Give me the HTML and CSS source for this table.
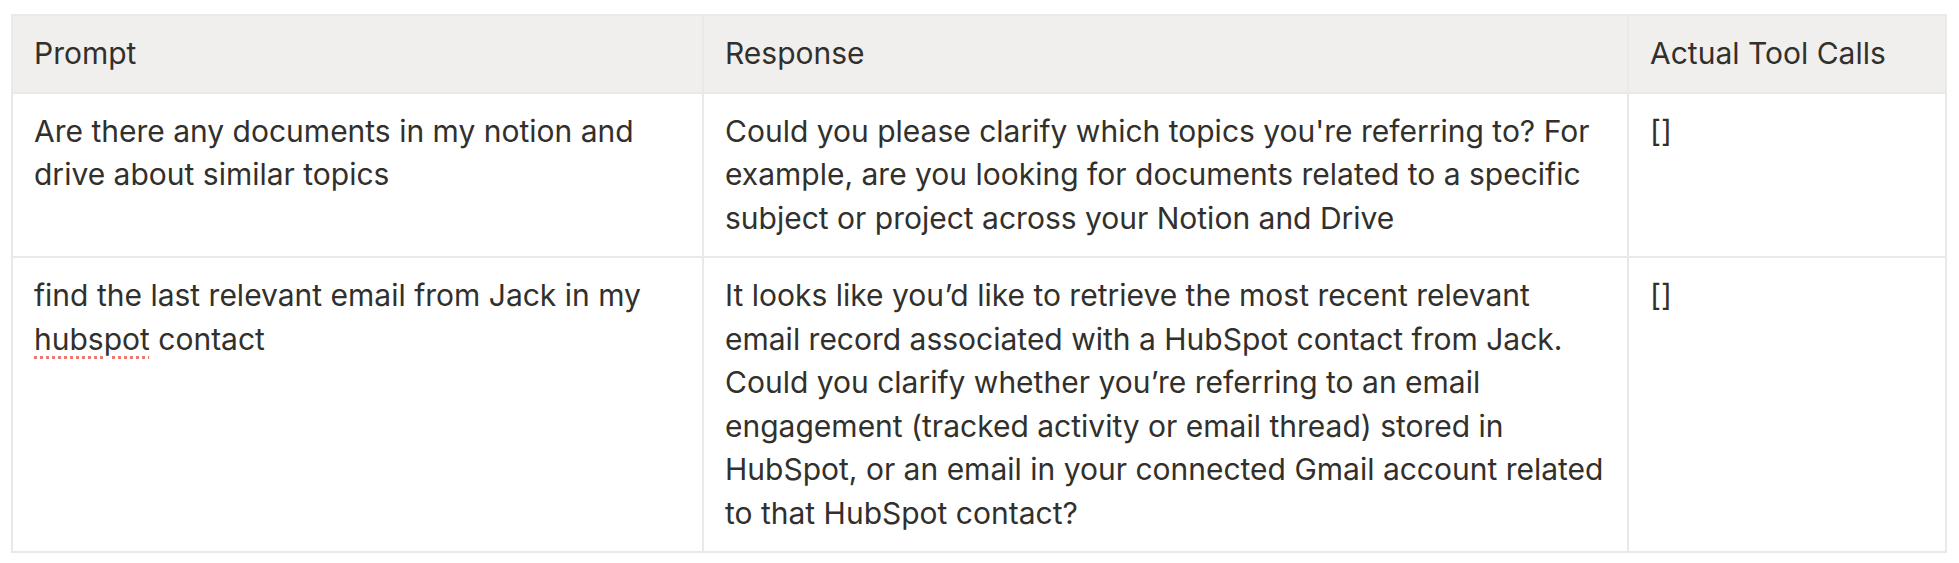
FILE: index.html
```html
<!DOCTYPE html>
<html lang="en">
<head>
<meta charset="utf-8">
<title>Tool calls table</title>
<link rel="stylesheet" href="styles.css">
</head>
<body>
<div class="page">
  <table class="sheet">
    <colgroup>
      <col class="c-prompt">
      <col class="c-response">
      <col class="c-tools">
    </colgroup>
    <thead>
      <tr>
        <th>Prompt</th>
        <th>Response</th>
        <th>Actual Tool Calls</th>
      </tr>
    </thead>
    <tbody>
      <tr>
        <td>Are there any documents in my notion and drive about similar topics</td>
        <td>Could you please clarify which topics you're referring to? For example, are you looking for documents related to a specific subject or project across your Notion and Drive</td>
        <td>[]</td>
      </tr>
      <tr>
        <td>find the last relevant email from Jack in my <span class="misspelled">hubspot</span> contact</td>
        <td>It looks like you’d like to retrieve the most recent relevant email record associated with a HubSpot contact from Jack. Could you clarify whether you’re referring to an email engagement (tracked activity or email thread) stored in HubSpot, or an email in your connected Gmail account related to that HubSpot contact?</td>
        <td>[]</td>
      </tr>
    </tbody>
  </table>
</div>
</body>
</html>
```
FILE: styles.css
```css
html, body {
  margin: 0;
  padding: 0;
  background: #ffffff;
}

.page {
  padding: 14px 0 0 11px;
}

.sheet {
  border-collapse: collapse;
  table-layout: fixed;
  width: 1934px;
  font-family: Inter, "Noto Sans", sans-serif;
  font-size: 30px;
  line-height: 43.5px;
  color: #32302c;
}

.c-prompt { width: 691px; }
.c-response { width: 925px; }
.c-tools { width: 318px; }

.sheet th,
.sheet td {
  border: 2px solid #e9e9e7;
  padding: 16px 21px 16px 21px;
  text-align: left;
  vertical-align: top;
  font-weight: 400;
}

.sheet th {
  background: #f1efed;
}

.misspelled {
  text-decoration-line: underline;
  text-decoration-style: dotted;
  text-decoration-color: #eb7b6f;
  text-decoration-thickness: 3px;
  text-underline-offset: 6px;
}
```
